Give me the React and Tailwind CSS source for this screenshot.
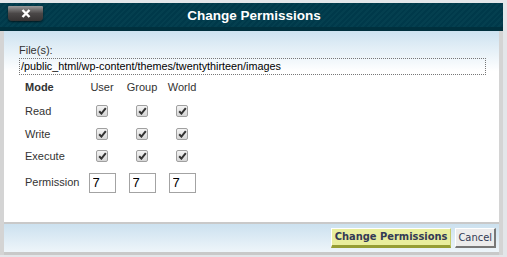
import React from "react";

const Check = () => (
  <span className="flex h-[12px] w-[12px] items-center justify-center rounded-[2px] border border-[#a0a0a0] bg-gradient-to-b from-[#f4f4f4] to-[#d6d6d6]">
    <svg width="9" height="8" viewBox="0 0 9 8">
      <path d="M1.2 4.3 L3.4 6.6 L7.8 1.2" fill="none" stroke="#333" strokeWidth="2" />
    </svg>
  </span>
);

const rows = ["Read", "Write", "Execute"];

export default function App() {
  return (
    <div className="h-[257px] w-[507px] overflow-hidden bg-[#e3e6e9] pt-[3px] font-['Liberation_Sans',Arial,sans-serif]">
      <div className="w-[503px]">
        <div className="relative flex h-[28px] items-start bg-[#003c4b] bg-[repeating-linear-gradient(135deg,#043f4f_0px,#043f4f_2px,#00394a_2px,#00394a_4px)] border-b-[4px] border-[#00303d]">
          <button className="absolute left-[8px] top-[3px] flex h-[15px] w-[35px] items-center justify-center rounded-b-[4px] rounded-t-[1px] bg-gradient-to-b from-[#9a9a9a] via-[#4a4747] to-[#363333] shadow-[0_1px_2px_rgba(0,0,0,0.6)]">
            <svg width="10" height="9" viewBox="0 0 10 9">
              <path d="M1.5 1 L8.5 8 M8.5 1 L1.5 8" stroke="#fff" strokeWidth="2.4" />
            </svg>
          </button>
          <div className="w-full pt-[4px] pl-[5px] text-center text-[13.5px] font-bold leading-[17px] text-white">Change Permissions</div>
        </div>
        <div className="border-x-[4px] border-[#d4d4d4] bg-gradient-to-b from-[#cde2f0] via-white via-[18%] to-white">
          <div className="h-[191px] pl-[15px] pr-[13px] pt-[13px] text-[11px] text-[#333]">
            <div className="leading-[13px] text-[#333]">File(s):</div>
            <div className="mt-[1px] h-[17px] border border-dotted border-[#777] pl-[1px] text-[10.8px] leading-[15px] text-black">/public_html/wp-content/themes/twentythirteen/images</div>
            <div className="mt-[5px] grid grid-cols-[57px_40px_40px_40px] pl-[6px]">
              <div className="h-[20px] font-bold leading-[14px]">Mode</div>
              <div className="text-center leading-[14px]">User</div>
              <div className="text-center leading-[14px]">Group</div>
              <div className="text-center leading-[14px]">World</div>
              {rows.map((r) => (
                <React.Fragment key={r}>
                  <div className="flex h-[22.5px] items-center">{r}</div>
                  <div className="flex items-center justify-center"><Check /></div>
                  <div className="flex items-center justify-center"><Check /></div>
                  <div className="flex items-center justify-center"><Check /></div>
                </React.Fragment>
              ))}
              <div className="flex h-[30px] items-center">Permission</div>
              {[0, 1, 2].map((i) => (
                <div key={i} className="flex items-center justify-center">
                  <input readOnly value="7" className="h-[20px] w-[27px] border border-[#a3a3a3] bg-white pl-[3px] text-[13px] text-black outline-none" />
                </div>
              ))}
            </div>
          </div>
          <div className="flex h-[33px] items-center justify-end gap-[4px] border-t-[2px] border-b-[3px] border-[#c9c9c9] bg-gradient-to-b from-[#cce1ef] to-[#eef5fa] pr-[3px]">
            <button className="h-[20px] border border-[#fff] border-b-[3px] border-b-[#969e34] border-r-[#c6cb6c] bg-[#e9ee9d] px-[3px] font-['DejaVu_Sans_Condensed','DejaVu_Sans',Verdana,sans-serif] text-[11px] font-bold leading-[14px] text-[#333a55]">Change Permissions</button>
            <button className="h-[20px] border border-[#fff] border-b-[2px] border-r-[2px] border-b-[#777] border-r-[#777] bg-[#ececec] px-[2px] font-['DejaVu_Sans_Condensed','DejaVu_Sans',Verdana,sans-serif] text-[11px] leading-[14px] text-[#333a55]">Cancel</button>
          </div>
        </div>
      </div>
    </div>
  );
}
